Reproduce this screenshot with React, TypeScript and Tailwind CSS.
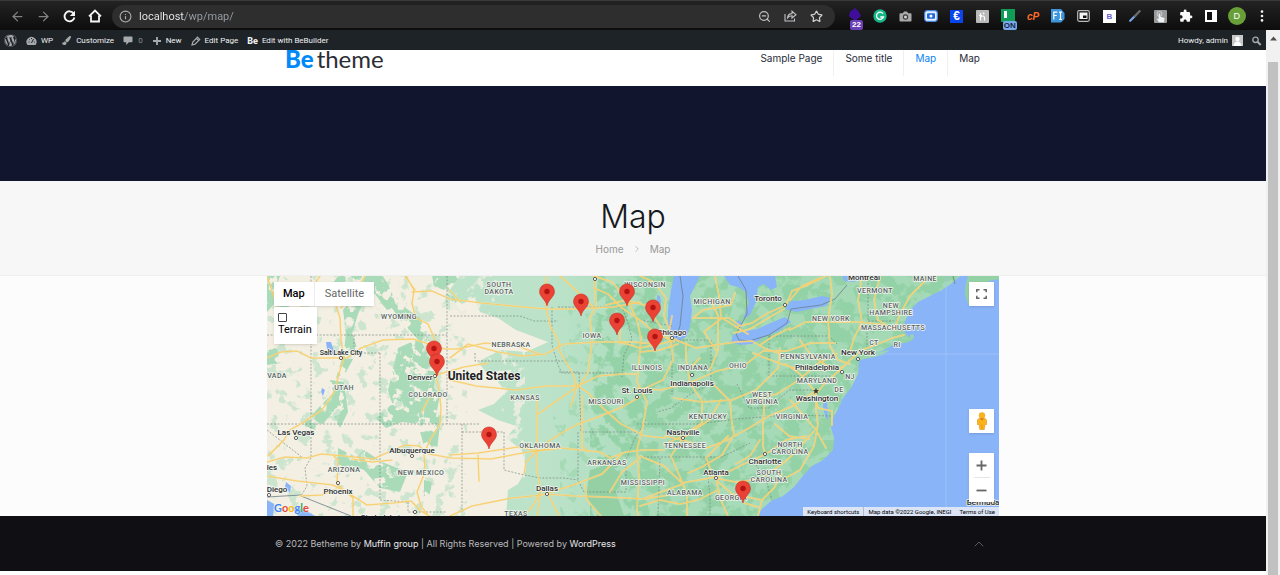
import type { ReactNode } from 'react';
import {
  ArrowLeft,
  ArrowRight,
  ChevronRight,
  ChevronUp,
  Info,
  Star,
  ZoomOut,
} from 'lucide-react';
import { FaWordpress, FaPaintBrush } from 'react-icons/fa';
import { MdExtension } from 'react-icons/md';

/* ---------- browser toolbar ---------- */

function ToolButton({ label, children }: { label: string; children: ReactNode }) {
  return (
    <button type="button" aria-label={label} className="relative flex h-6 w-full items-center justify-center">
      {children}
    </button>
  );
}

function BrowserBar() {
  return (
    <div className="flex h-[30px] items-center border-t border-[#3a3a3a] bg-linear-to-b from-[#232323] to-[#0d0d0d] pt-px pr-[5px] pl-1">
      <div className="mr-1 grid w-[104px] shrink-0 grid-cols-4">
        <ToolButton label="Back"><ArrowLeft size={15} strokeWidth={2} color="#808285" /></ToolButton>
        <ToolButton label="Forward"><ArrowRight size={15} strokeWidth={2} color="#808285" /></ToolButton>
        <ToolButton label="Reload">
          <svg width="13" height="13" viewBox="0 0 13 13">
            <path d="M10.600 3.400A5 5 0 1 0 11.400 7.500" fill="none" stroke="#f6f6f6" strokeWidth="1.900" />
            <path d="M12 .8v5.200H6.800Z" fill="#f6f6f6" />
          </svg>
        </ToolButton>
        <ToolButton label="Home">
          <svg width="14" height="14" viewBox="0 0 14 14" fill="none" stroke="#f6f6f6" strokeWidth="1.800">
            <path d="M1 7.400 7 1.500l6 5.900M3 6.500v6h8v-6" />
          </svg>
        </ToolButton>
      </div>
      <div className="flex h-[23px] min-w-0 flex-1 items-center rounded-full bg-[#2e2e2e] pr-1.5 pl-[7px]">
        <Info size={13} strokeWidth={2} color="#adafb2" className="shrink-0" />
        <input
          aria-label="Address"
          defaultValue="localhost/wp/map/"
          className="ml-[7px] h-5 min-w-0 flex-1 bg-[linear-gradient(90deg,#eceef0_46px,#9aa0a6_46px)] bg-clip-text pt-px font-['Roboto','Liberation_Sans',sans-serif] text-[11px] leading-5 text-transparent outline-none"
        />
        <div className="grid w-[78px] grid-cols-3">
          <ToolButton label="Zoom"><ZoomOut size={13} strokeWidth={2.2} color="#c0c2c4" /></ToolButton>
          <ToolButton label="Share">
            <svg width="13" height="12" viewBox="0 0 13 12" fill="none" stroke="#c0c2c4" strokeWidth="1.100">
              <path d="M1 4v7h9.500V8.500M3.500 8C3.800 5 5.500 3.700 8 3.600V1.300l4 3.400-4 3.300V5.800C6 5.800 4.700 6.500 3.500 8Z" />
            </svg>
          </ToolButton>
          <ToolButton label="Bookmark"><Star size={13} strokeWidth={2.200} color="#cfd1d3" /></ToolButton>
        </div>
      </div>
      <div className="ml-[7px] grid w-[433px] shrink-0 grid-cols-17 font-['Liberation_Sans',sans-serif]">
        <ToolButton label="Blocks">
          <svg width="14" height="16" viewBox="0 0 14 16"><path d="M2 4 7 0l4 4 2 4-6 5-6-5Z" fill="#3f0f9c" /></svg>
          <span className="absolute -bottom-0.5 left-2 rounded-xs bg-[#6b3fb5] px-0.5 text-[8px] leading-[10px] font-bold text-white">22</span>
        </ToolButton>
        <ToolButton label="Grammar">
          <svg width="14" height="14" viewBox="0 0 14 14">
            <circle cx="7" cy="7" r="6.700" fill="#15b885" />
            <path d="M10 4.600A3.600 3.600 0 1 0 10.500 8H7.300m3.200 0-1 1.300" fill="none" stroke="#fff" strokeWidth="1.300" />
          </svg>
        </ToolButton>
        <ToolButton label="Capture">
          <svg width="13" height="11" viewBox="0 0 13 11">
            <path d="M1.500 2.200h2.300L5 .5h3l1.200 1.700h2.300c.6 0 1 .4 1 1v6.300c0 .6-.4 1-1 1h-10c-.6 0-1-.4-1-1V3.200c0-.6.4-1 1-1Z" fill="#a9a9a9" />
            <circle cx="6.500" cy="6" r="2.700" fill="#3b3b3b" /><circle cx="6.500" cy="6" r="1.500" fill="#d2d2d2" />
          </svg>
        </ToolButton>
        <ToolButton label="Screen recorder">
          <svg width="14" height="12" viewBox="0 0 14 12">
            <rect x=".7" y=".7" width="12.600" height="10.600" rx="2.500" fill="#e4efff" stroke="#4a86e8" strokeWidth="1.200" />
            <rect x="3" y="3.200" width="8" height="5.600" rx="1" fill="#2266d8" />
            <circle cx="7" cy="6" r="1.500" fill="#fff" />
          </svg>
        </ToolButton>
        <ToolButton label="Currency"><span className="size-[13px] bg-[#0a45ec] text-center text-xs leading-[13px] font-bold text-white">€</span></ToolButton>
        <ToolButton label="Honey">
          <svg width="13" height="13" viewBox="0 0 13 13">
            <rect width="13" height="13" rx="1" fill="#b9b9b9" />
            <path d="M4.500 3v7.500M3 5.500h3M4.500 7.500c2-2.500 4-1.500 4 .3v2.700M7 2.600l1.300 1.500" fill="none" stroke="#fff" strokeWidth="1.200" />
          </svg>
        </ToolButton>
        <ToolButton label="Switch">
          <svg width="14" height="14" viewBox="0 0 14 14"><rect width="14" height="13" fill="#0f9d58" /><path d="M3 2h3v7H3z" fill="#fff" /></svg>
          <span className="absolute -bottom-0.5 left-2 rounded-xs bg-[#79a7e8] px-px text-[8px] leading-[9px] font-bold text-[#14284c]">ON</span>
        </ToolButton>
        <ToolButton label="cPanel"><span className="text-[10px] font-bold text-[#ff6c2c] italic">cP</span></ToolButton>
        <ToolButton label="Font inspector">
          <svg width="14" height="14" viewBox="0 0 14 14">
            <path d="M0 0h10l3.500 4v6L10 13.500H0Z" fill="#3c96dd" />
            <path d="M2.800 10.500V3.200h3.500M2.800 6.500h3M8 3.200h3M9.500 3.200v7.300M8 10.500h3" fill="none" stroke="#fff" strokeWidth="1.200" />
          </svg>
        </ToolButton>
        <ToolButton label="Picture in picture">
          <svg width="13" height="12" viewBox="0 0 13 12">
            <rect x=".7" y=".7" width="11.600" height="10.600" rx="1.500" fill="#111" stroke="#bbb" strokeWidth="1.200" />
            <path d="M2.500 2.500h8v6.500h-8z" fill="#f4f4f4" /><path d="M6 5.500h3.500V8H6z" fill="#111" />
          </svg>
        </ToolButton>
        <ToolButton label="Bootstrap"><span className="size-[13px] bg-white text-center text-[8px] leading-[13px] font-bold text-[#6a60d8]">B</span></ToolButton>
        <ToolButton label="Color picker">
          <svg width="12" height="12" viewBox="0 0 12 12">
            <path d="m1.200 10.800 5-5" stroke="#7fa6e8" strokeWidth="2.200" strokeLinecap="round" />
            <path d="m6 6 4.500-4.800" stroke="#68696c" strokeWidth="2.400" strokeLinecap="round" />
          </svg>
        </ToolButton>
        <ToolButton label="Pointer">
          <svg width="13" height="13" viewBox="0 0 13 13">
            <rect width="13" height="13" rx="1" fill="#9a9a9a" />
            <circle cx="5.500" cy="4" r="2.500" fill="none" stroke="#c9ced4" />
            <path d="M4.700 3.500h1.600v3.200l4.200 1.200-.5 4.300H5L2.500 8.500l2.200.5Z" fill="#eef1f4" />
          </svg>
        </ToolButton>
        <ToolButton label="Extensions"><MdExtension size={14} color="#f8f8f8" /></ToolButton>
        <ToolButton label="Side panel">
          <svg width="12" height="12" viewBox="0 0 12 12"><path d="M0 0h12v12H0z" fill="#fff" /><path d="M2 2h5v8H2z" fill="#111" /></svg>
        </ToolButton>
        <ToolButton label="Profile"><span className="size-[18px] shrink-0 rounded-full bg-[#689f38] text-center text-[9px] leading-[18px] text-white">D</span></ToolButton>
        <ToolButton label="Menu">
          <svg width="4" height="12" viewBox="0 0 4 12" fill="#f2f2f2"><circle cx="2" cy="1.600" r="1.300" /><circle cx="2" cy="6" r="1.300" /><circle cx="2" cy="10.400" r="1.300" /></svg>
        </ToolButton>
      </div>
    </div>
  );
}

/* ---------- WordPress admin bar ---------- */

function AdminBar() {
  return (
    <div className="flex h-5 items-center justify-between bg-[#1d2327] pt-px pr-1 pl-1 font-['Roboto','Noto_Sans',sans-serif] text-[8px] text-[#f0f0f1]">
      <div className="flex items-center gap-[9px]">
        <a href="#about" aria-label="About WordPress"><FaWordpress size={13} color="#a7aaad" /></a>
        <a href="#site" className="flex items-center gap-1">
          <svg width="11" height="10" viewBox="0 0 11 10">
            <path d="M1.500 9A5 5 0 1 1 9.500 9Z" fill="#a7aaad" />
            <path d="M5.500 7 7.500 3M2.500 6h1M3.300 3.500l.7.500M5.500 2v1M8 6h.8" stroke="#1d2327" />
          </svg>
          WP
        </a>
        <a href="#customize" className="flex items-center gap-[5px]"><FaPaintBrush size={9} color="#a7aaad" />Customize</a>
        <a href="#comments" className="flex items-center gap-[5px] text-[#8c8f94]">
          <svg width="10" height="9" viewBox="0 0 10 9"><path d="M1.500.5h7c.6 0 1 .4 1 1v3.700c0 .6-.4 1-1 1H5.800L3.200 9V6.200H1.500c-.6 0-1-.4-1-1V1.500c0-.6.4-1 1-1Z" fill="#a7aaad" /></svg>
          0
        </a>
        <a href="#new" className="flex items-center gap-1">
          <svg width="10" height="10" viewBox="0 0 10 10"><path d="M5 1v8M1 5h8" stroke="#a7aaad" strokeWidth="1.800" /></svg>
          New
        </a>
        <a href="#edit" className="flex items-center gap-1">
          <svg width="10" height="10" viewBox="0 0 10 10" fill="none" stroke="#a7aaad" strokeWidth="1.200">
            <path d="m1 9 .8-3L6.500 1.200l2.200 2.200L4 8.200ZM5.500 2.500l2 2" />
          </svg>
          Edit Page
        </a>
        <a href="#builder" className="flex items-center gap-1"><b className="text-[9px] leading-3 font-extrabold">Be</b>Edit with BeBuilder</a>
      </div>
      <div className="flex items-center">
        <a href="#profile" className="flex items-center gap-1">
          Howdy, admin
          <svg width="11" height="11" viewBox="0 0 11 11">
            <path d="M0 0h11v11H0z" fill="#c6c8ca" /><circle cx="5.500" cy="4" r="2.200" fill="#fff" /><path d="M1.500 11c.3-6 7.700-6 8 0Z" fill="#fff" />
          </svg>
        </a>
        <button type="button" aria-label="Search" className="ml-2">
          <svg width="11" height="10" viewBox="0 0 11 10" fill="none" stroke="#a7aaad"><circle cx="4.500" cy="3.800" r="2.700" strokeWidth="1.300" /><path d="m6.500 5.800 3.200 3.200" strokeWidth="2" /></svg>
        </button>
      </div>
    </div>
  );
}

/* ---------- map ---------- */

const WEST_FOREST = [
  'M267 276h13l-5 14 8 4-16 18ZM267 345l10 4 4 14-14 2ZM338 276h45l8 14 5 16-9 4-12-16-14 8-10-12-12 3-6-10Z',
  'M343 310l10-12 9-10 4 8-8 18-6 20 6 16-12 22-10 6 8-26 2-20ZM330 380l14 2 4 30-8 16-6-12 2-14Z',
  'M432 276h38l-4 18-12 10-10-14-10-4ZM386 300l14 4 20 14 10 24-8 2-20-22Z',
  'M398 348l18-8 10 4 12 14-4 30 6 6-6 34-10 18-6-22-16-2-16 6-10-10 16-14-4-14Z',
  'M364 450l18 12 26 10-8 20-20-4-16-18-16-6ZM424 480l8 2-2 12-6 2ZM425 420l16-4-4 34-10-6Z',
  'M278 300l20 12-6 16-16-8ZM303 425l18-20 14-14 4 14-22 26ZM338 448l16 8-4 14-12-6Z',
];

const PLAINS =
  'M460 276 448 292 462 304 474 298 480 312 498 318 516 330 548 342 526 352 500 350 478 362 486 372 512 370 498 382 506 392 494 404 478 410 498 420 516 426 506 438 522 450 526 470 518 484 508 490 506 516H1010V266H460Z';

const ATLANTIC =
  'M960 276 951 284 942 290 930 296 918 302 911 309 905 321 903 330 907 335 913 340 905 343 894 344 884 350 866 357 859 361 858 374 851 388 843 398 838 409 832 420 831 428 834 438 833 450 823 460 812 466 802 477 794 487 783 496 771 501 762 509 757 517H1000V276Z';

const LAKES = [
  'M674 276 671 290 668 311 668 329 671 339 679 341 687 336 690 326 692 310 690 296 695 286 700 276Z',
  'M724 276 730 285 738 287 746 292 749 303 743 319 750 315 756 302 758 287 764 284 771 290 777 287 775 276Z',
  'M736 322 740 320 742 326 737 328Z',
  'M733 335 731 342 740 345 752 344 764 337 779 331 791 322 785 317 773 322 757 329 745 331Z',
  'M785 309 791 301 805 300 822 296 831 298 826 306 811 309 796 312Z',
  'M326 342l5 0 2 6 2 8-5-3-3-4ZM322 388l3 2-2 6-2-4ZM267 500l7 4-1 14h-6ZM286 482l5 4-1 7-5-6ZM291 507l12 2 14 8h-18ZM842 276h18l-6 6-10-1ZM824 396l3 6 1 16 4 8-5-4-4-14Z',
  'M657 295l3 1 1 6-2 5-2-5Z',
];

const ROADS = [
  'M267 358l14-6 16-1 14 7h36l14-10 22-8 30-1 32 10h12l28-6 32 3 22 8',
  'M406 276l8 14-2 14 4 14 12 6 8 18-2 16 2 18 3 14 2 18-1 16-10 16-6 14 1 18-8 20 4 14 6 8',
  'M334 300l6 18 1 22 3 18-4 12-6 22-12 18-18 12-14 8-6 10-16 16',
  'M412 292l20-1 18 8 32 4 30 3 34 3h28l40-2 26-5',
  'M267 462l18-5 22 1 14-4 24 2 28 3 18-8 14-6 14 1 10 8 22 4 40 1 26-5 30-5 10-1',
  'M267 476l30 5 36 4 20 11 14 9 26-2 18-2 10 10 10 6',
  'M334 456l4 4-1 24 16 14M300 496l22-1 14-6M353 496v20M392 460l-20 2-20-3',
  'M450 358l18-14 30 8 24 4 24-2 18-10 36-2 34 0 20 2',
  'M450 380l26 6 40 4 30-4 32 0',
  'M546 276v32l4 18 8 14 2 12 12 20 5 14-6 20M594 276l2 30-6 12 2 24-4 30-9 14',
  'M537 396v54l0 20 4 20-4 26M450 455l28-2 40-6 20 4 24-3 38 4 10 6 16-6 16-2 22 0',
  'M538 448l22-14 18-10 20-7 24-10 18-10M538 414l20-14 20-14 20-10 24-2 16 0',
  'M582 396v50l6 6M478 455l1 26M538 450l-12 12-2 12M450 516l22-10 40-8 30-3 34-11 26-10 20-20',
  'M545 494l30 2 30 1 40 2 24-4M541 490l-7 14-10 12M549 496l10 20M585 484l2 16 14 16M430 396l-8 16',
  'M594 288l14 6 14 14 18 12 14 12 20 10M627 298l10 22 4 18-2 24-2 20 10 20-4 24-6 24 2 26-2 34 2 10',
  'M606 305l20-5 22 6 8 14 14 20M620 330v14M620 342l20 6 28-6 8-3M640 352l20-2 18-6',
  'M671 340l2 20-10 20-26 12M637 388l24 2 28-7 28-12 28-6 18-14 24 0 24-8 24 0',
  'M676 340l20 8 26-4 14-2 16-1 14 8 18 6M690 383l-4-24 0-16M672 316l-3 16 4 8',
  'M690 383l12 18 0 22-22 14-16 8M690 383l24 2 16 16 2 22 2 12-12 20-20 12-14 6',
  'M674 398l28 4 30-2 24-10 22-22 2-20M710 370l8-20 0-34-8-18M693 318h36l10 7M693 318l10-8 28-5 4-12',
  'M716 350l-12-18 18-14 26 16M736 327l16-4 16-10 18-8 6-14 16-6 20-10M734 333l16-4 20-12 14-8',
  'M790 330l16-8 24 0 28 0 20 2 18 4M760 345l14-9 16-8M753 353l20 8 24 8 26 1 20-3M790 300l12-14 18-8',
  'M830 276l2 18-4 26 2 26 8 14 12 4M862 276l-4 24 4 22-8 16-4 14M880 276l-6 24 4 20 16 10 6-16 10-18 14-14',
  'M850 360l12-10 16-6 14-6 12-3M850 360l-10 10-14 12-10 12 0 16 2 14-4 22-14 24-22 12',
  'M786 364l14 10 14 16 4 18M757 398l20-4 22-14 18-16 20-10M765 398l-2 24 0 24 2 8',
  'M665 436l18 4 24 8 20-8 22-12 20-12 24-10 24-16M683 438l-12 18 12 28 4 12 0 20M683 438l26-18 12-20',
  'M714 478l-8-20 22-22M714 478l22 4 24-3 12-8 14-10 14-14 14-16M716 478l28-14 22-10 20-14 20-4',
  'M640 456l24 10 18 17 34-6M640 458l-18 14-12 20M683 484l-22 8-16 6M716 478l4 20 8 18M716 480l16 14 30 6 12-12 8-14',
  'M762 500l-4 16M744 503l14 4M640 506l20-6 20 4 18-4 20-10M818 408l14 3 0 14M790 400l14 16 12 14 10 18',
  'M760 440l-10 16-14 8M775 424l14 12 20 3M594 276l18 6 14 16M640 276l14 6 12 16-2 18 8 20M715 276l4 20 2 20',
  'M575 384l12 8 18 18 16 14 24 12 20 2M560 276l20 18 14 14M700 358l-12 12M800 340l10 14 20 14',
  'M450 290l10 12M405 276l10 14M320 276l-14 20-10 24M365 276l-10 16-14 16M267 276l10 30M436 375l28-8 24-4',
];

const BORDERS =
  'M447 276v148M311 276v182l-6 10 2 18-6 10M267 335h180M354 335v18h26M380 353v147M267 424h212M450 316h70l14 5 24 0M462 424v88M462 432h42v38l16 4 20 4 24 0 14 2M380 500l28 2v10h38M558 307h64l6 16 4 16-8 16-2 22M552 307v38l6 20 4 8h58M559 372h20l2 60h56M567 361h-92v-8M578 432v48l6 12h42M637 424h60l40-5 50-4 44 1M640 457h82l28-14M672 340h38M711 340v44l-20 10-20 14-14 4M640 320l32 6M672 341v54M769 336v40M769 376h62M769 336l60 0 8 8M867 322v26M868 321h30M868 276v44M706 457l4 40v20M750 456l16 24 6 20M626 490v-30l8-20 12-20M660 458l-2 58M737 384l12 24 20 0 20-18 26 0M267 430l36 28';

type Label = [string, number, number];

const STATES: Label[] = [
  ['SOUTH', 499, 287], ['DAKOTA', 499, 294], ['WYOMING', 399, 319], ['NEBRASKA', 511, 347], ['IOWA', 592, 338],
  ['WISCONSIN', 645, 287], ['MICHIGAN', 712, 304], ['ILLINOIS', 647, 370], ['INDIANA', 693, 370], ['OHIO', 738, 368],
  ['PENNSYLVANIA', 808, 359], ['NEW YORK', 831, 321], ['VERMONT', 875, 293], ['NEW', 891, 308], ['HAMPSHIRE', 891, 315],
  ['MASSACHUSETTS', 893, 330], ['CT', 874, 345], ['RI', 897, 347], ['NJ', 850, 379], ['DE', 839, 392], ['MAINE', 925, 281],
  ['MARYLAND', 817, 383], ['WEST', 762, 397], ['VIRGINIA', 762, 404], ['VIRGINIA', 792, 419], ['KENTUCKY', 708, 419],
  ['TENNESSEE', 685, 448], ['NORTH', 790, 447], ['CAROLINA', 790, 454], ['SOUTH', 769, 475], ['CAROLINA', 769, 482],
  ['ALABAMA', 685, 495], ['GEORGIA', 731, 500], ['MISSISSIPPI', 643, 485], ['ARKANSAS', 607, 465], ['MISSOURI', 606, 404],
  ['KANSAS', 525, 400], ['OKLAHOMA', 540, 448], ['TEXAS', 516, 516], ['COLORADO', 428, 397], ['UTAH', 344, 390],
  ['VADA', 277, 378], ['ARIZONA', 344, 472], ['NEW MEXICO', 421, 475],
];

const CITIES: Label[] = [
  ['Toronto', 768, 301], ['Chicago', 672, 335], ['Indianapolis', 692, 386], ['St. Louis', 637, 393], ['New York', 858, 355],
  ['Philadelphia', 817, 370], ['Washington', 817, 401], ['Nashville', 683, 435], ['Charlotte', 765, 464], ['Atlanta', 716, 475],
  ['Dallas', 547, 491], ['Albuquerque', 412, 453], ['Phoenix', 338, 494], ['Las Vegas', 296, 435], ['Denver', 420, 380],
  ['Montreal', 864, 280], ['Diego', 277, 492], ['les', 272, 470], ['Ciudad Juárez', 386, 520], ['Bermuda', 983, 505],
];

const CITY_DOTS: [number, number][] = [
  [785, 305], [672, 338], [692, 375], [637, 397], [858, 359], [842, 372], [683, 438], [765, 454], [716, 478], [547, 494],
  [412, 456], [338, 483], [296, 438], [435, 376], [341, 358], [595, 279], [415, 512], [269, 495],
];

const PINS: [number, number][] = [
  [547, 306], [581, 316], [627, 306], [653, 322], [617, 335], [655, 351], [434, 363], [437, 376], [489, 449], [743, 503],
];

function MapDrawing() {
  return (
    <svg viewBox="267 276 732 240" className="block w-full" role="img" aria-label="Map of the United States">
      <defs>
        <filter id="patches" x="0" y="0" width="1" height="1">
          <feTurbulence type="fractalNoise" baseFrequency="0.07" numOctaves="4" seed="7" />
          <feColorMatrix values="0 0 0 0 0  0 0 0 0 0  0 0 0 0 0  12 0 0 0 -5.400" result="noise" />
          <feComposite in="SourceGraphic" in2="noise" operator="in" />
        </filter>
        <filter id="sparse" x="0" y="0" width="1" height="1">
          <feTurbulence type="fractalNoise" baseFrequency="0.09" numOctaves="4" seed="12" />
          <feColorMatrix values="0 0 0 0 0  0 0 0 0 0  0 0 0 0 0  12 0 0 0 -7" result="noise" />
          <feComposite in="SourceGraphic" in2="noise" operator="in" />
        </filter>
        <filter id="dense" x="0" y="0" width="1" height="1">
          <feTurbulence type="fractalNoise" baseFrequency="0.09" numOctaves="4" seed="3" />
          <feColorMatrix values="0 0 0 0 0  0 0 0 0 0  0 0 0 0 0  14 0 0 0 -5.500" result="noise" />
          <feComposite in="SourceGraphic" in2="noise" operator="in" />
        </filter>
        <linearGradient id="fade" x1="0" x2="1">
          <stop offset="0" stopColor="#9dd6af" stopOpacity="0" />
          <stop offset=".25" stopColor="#9dd6af" stopOpacity=".6" />
          <stop offset=".5" stopColor="#9dd6af" stopOpacity=".7" />
          <stop offset="1" stopColor="#9dd6af" stopOpacity=".8" />
        </linearGradient>
      </defs>
      <path d="M267 276h732v240H267z" fill="#f3efe3" />
      <path d="M267 276h200v240H267z" fill="#b5dfc3" filter="url(#sparse)" opacity=".6" />
      <path d={WEST_FOREST.join('')} fill="#a9dbb9" filter="url(#dense)" />
      <path d={PLAINS} fill="#bce3ca" />
      <path d="M450 276h50v60h-50zM470 330h55v150h-55z" fill="#f3efe3" filter="url(#sparse)" opacity=".8" />
      <path d="M545 276h454v240H545Z" fill="url(#fade)" />
      <path d="M598 276h401v240H590V430Z" fill="#92d1a5" filter="url(#patches)" opacity=".9" />
      <path d="M550 400h50v116h-40v-60ZM556 310h50v60h-40Z" fill="#a6dab7" filter="url(#sparse)" />
      <path d="M590 470l20-6 10 10-4 18 8 24h-24l-14-20Z" fill="#94d0a4" />
      <g fill="#8ab4f8">
        <path d={ATLANTIC} />
        <path d={LAKES.join('')} />
      </g>
      <path d="M851 360 868 354 890 350 882 355 860 360Z" fill="#9ad6ab" />
      <path d="M900 336l8 2 6 1-1-5-3 1 1 4-8 1Z" fill="#9ad6ab" />
      <path d="M968 276h31v3l-10 2-8 10-6 14-7-1-3-10 1-10Z" fill="#93d2a5" />
      <path d="m842 397-8 10-2 10 4-10ZM820 418l12 1 0 7-5 4ZM818 440l16 0-2 8-10 3Z" fill="#94d2a5" />
      <path d="M946 276v240M866 354h133" stroke="#a3c4fa" strokeWidth=".7" />
      <path d={BORDERS} fill="none" stroke="#72807a" strokeWidth=".8" strokeDasharray="2 1.500" opacity=".8" />
      <path d="M680 276l3 20-3 30-4 12M738 276l8 14 1 24-11 20 3 6 10 1 20-6 18-12 4-14 30-4 14-6 12-14M955 284l-2-8M301 496l50 20M267 497l34-2" fill="none" stroke="#6b7d8a" strokeWidth=".8" />
      <g fill="none" strokeLinejoin="round" strokeLinecap="round">
        <path d={ROADS.join('')} stroke="#f8e3a6" strokeWidth="1.900" opacity=".6" />
        <path d={ROADS.join('')} stroke="#f7ce6b" strokeWidth="1.100" />
      </g>
      <g fill="#fff" stroke="#4c4c4c" strokeWidth=".9">
        {CITY_DOTS.map(([x, y]) => <circle key={`${x}-${y}`} cx={x} cy={y} r="1.600" />)}
      </g>
      <path d="m816 388 .9 2 2.100.2-1.600 1.400.5 2.100-1.900-1.100-1.900 1.100.5-2.100-1.600-1.400 2.100-.2Z" fill="#333" />
      <g textAnchor="middle" stroke="#f4f8f2" strokeWidth="1.500" strokeLinejoin="round" paintOrder="stroke" className="font-['Roboto','Liberation_Sans',sans-serif]">
        <g fill="#59615e" className="text-[7px] font-medium tracking-[0.4px]">
          {STATES.map(([name, x, y]) => <text key={`${name}-${x}`} x={x} y={y}>{name}</text>)}
        </g>
        <g fill="#2b2d2e" className="text-[8px] font-medium">
          {CITIES.map(([name, x, y]) => <text key={name} x={x} y={y}>{name}</text>)}
          <text x="341" y="355" className="text-[7px]">Salt Lake City</text>
        </g>
        <text x="484" y="380" fill="#1f2122" className="text-[12px] font-bold">United States</text>
      </g>
      {PINS.map(([x, y]) => (
        <g key={`${x}-${y}`} transform={`translate(${x} ${y})`}>
          <path d="M0 0C-1.200-6.500-7.500-9-7.500-14.600a7.500 7.500 0 0 1 15 0C7.500-9 1.200-6.500 0 0Z" fill="#ea4335" stroke="#c5221f" strokeWidth=".5" />
          <circle cy="-14.500" r="2.700" fill="#b31412" />
        </g>
      ))}
    </svg>
  );
}

function MapWidget() {
  return (
    <section className="relative mx-auto w-full max-w-[732px] overflow-hidden font-['Roboto','Liberation_Sans',sans-serif]">
      <MapDrawing />
      <div className="absolute top-1.5 left-[7px] flex flex-col items-start">
        <div className="flex h-6 items-center bg-white text-[11px] shadow-sm">
          <button type="button" className="h-full border-r border-[#ececec] px-[9px] font-medium text-black">Map</button>
          <button type="button" className="h-full px-2.5 text-[#666]">Satellite</button>
        </div>
        <label className="mt-px flex w-[43px] flex-col gap-0.5 bg-white px-1 pt-1.5 pb-2 text-[11px] leading-3 text-black shadow-sm">
          <input type="checkbox" className="size-[9px] appearance-none rounded-[1px] border border-[#444] bg-white" />
          Terrain
        </label>
      </div>
      <button type="button" aria-label="Toggle fullscreen" className="absolute top-1.5 right-[5px] flex h-6 w-[25px] items-center justify-center bg-white shadow-sm">
        <svg width="11" height="10" viewBox="0 0 11 10" fill="none" stroke="#666" strokeWidth="1.500"><path d="M.8 3.200V.8h2.700M7.500.8h2.700v2.400M10.200 6.800v2.400H7.500M3.500 9.200H.8V6.800" /></svg>
      </button>
      <button type="button" aria-label="Street View" className="absolute right-[5px] bottom-[83px] flex h-6 w-[25px] items-center justify-center bg-white shadow-sm">
        <svg width="10" height="18" viewBox="0 0 10 18">
          <path d="M2 6.500h6l1.700 1.500v4.500H8L7.300 17.500H2.700L2 12.500H.3V8Z" fill="#fbb31c" stroke="#d98a12" strokeWidth=".5" />
          <circle cx="5" cy="3.500" r="3" fill="#fbb31c" stroke="#e09a18" strokeWidth=".4" />
          <path d="m3 6.500 2 2 2-2Z" fill="#dc6a1b" /><path d="M5 12.500v5" stroke="#d98a12" strokeWidth=".6" />
        </svg>
      </button>
      <div className="absolute right-[5px] bottom-3.5 flex w-[25px] flex-col items-center bg-white shadow-sm">
        <button type="button" aria-label="Zoom in" className="flex h-6 w-full items-center justify-center">
          <svg width="11" height="11" viewBox="0 0 11 11"><path d="M5.500.5v10M.5 5.500h10" stroke="#666" strokeWidth="1.800" /></svg>
        </button>
        <span className="h-px w-4 bg-[#e6e6e6]" />
        <button type="button" aria-label="Zoom out" className="flex h-6 w-full items-center justify-center">
          <svg width="11" height="11" viewBox="0 0 11 11"><path d="M.5 5.500h10" stroke="#666" strokeWidth="1.800" /></svg>
        </button>
      </div>
      <a href="#google" className="absolute bottom-0.5 left-[7px] font-['Lato','Liberation_Sans',sans-serif] text-[11px] leading-3 font-bold [text-shadow:0_0_2px_white]">
        <span className="text-[#4285f4]">G</span><span className="text-[#ea4335]">o</span><span className="text-[#fbbc05]">o</span><span className="text-[#4285f4]">g</span><span className="text-[#34a853]">l</span><span className="text-[#ea4335]">e</span>
      </a>
      <div className="absolute right-0 bottom-0 flex h-[9px] items-center bg-[#f5f5f5]/75 text-[6px] leading-[9px] text-black">
        <button type="button" className="px-1">Keyboard shortcuts</button>
        <span className="border-l border-[#bbb] px-1">Map data ©2022 Google, INEGI</span>
        <a href="#terms" className="px-1">Terms of Use</a>
      </div>
    </section>
  );
}

/* ---------- page ---------- */

const NAV = [
  { label: 'Sample Page', active: false },
  { label: 'Some title', active: false },
  { label: 'Map', active: true },
  { label: 'Map', active: false },
];

function SiteHeader() {
  return (
    <header className="h-9 bg-white">
      <div className="mx-auto flex max-w-[732px] items-start justify-between pr-2 pl-[18px]">
        <a href="#home" className="flex items-baseline gap-[3px] font-['Lato','Liberation_Sans',sans-serif] text-2xl leading-[18px]">
          <span className="font-black text-[#0089f7]">Be</span>
          <span className="text-[#2b2d35]">theme</span>
        </a>
        <nav className="flex font-['Inter','Liberation_Sans',sans-serif] text-[10px] leading-4">
          {NAV.map((item, i) => (
            <a
              key={i}
              href={`#nav-${i}`}
              className={`h-[26px] border-r border-[#f0f0f0] px-[11px] last:border-r-0 ${item.active ? 'text-[#0a84f5]' : 'text-[#2a2b39]'}`}
            >
              {item.label}
            </a>
          ))}
        </nav>
      </div>
    </header>
  );
}

export default function App() {
  return (
    <div className="flex min-h-screen flex-col bg-white">
      <BrowserBar />
      <div className="flex flex-1">
        <div className="flex min-w-0 flex-1 flex-col">
          <AdminBar />
          <SiteHeader />
          <div className="h-[95px] bg-[#11162e]" />
          <div className="flex h-[95px] flex-col items-center border-b border-[#efefef] bg-[#f7f7f7] pt-4 font-['Inter','Liberation_Sans',sans-serif]">
            <h1 className="text-[32px] leading-10 font-light text-[#161922]">Map</h1>
            <nav aria-label="Breadcrumb" className="mt-1 flex items-center gap-2 text-[10px] leading-4 text-[#979797]">
              <a href="#home">Home</a>
              <ChevronRight size={10} strokeWidth={2} color="#b5b5b5" />
              <a href="#map">Map</a>
            </nav>
          </div>
          <main className="bg-[#fcfcfc]"><MapWidget /></main>
          <footer className="bg-[#101014]">
            <div className="mx-auto flex h-[55px] max-w-[732px] items-center justify-between pr-3.5 pl-2 font-['Inter','Liberation_Sans',sans-serif] text-[9px] text-[#b9b9bb]">
              <p>
                © 2022 Betheme by <a href="#muffin" className="text-[#e8e8e8]">Muffin group</a> | All Rights Reserved | Powered by{' '}
                <a href="#wordpress" className="text-[#e8e8e8]">WordPress</a>
              </p>
              <a href="#top" aria-label="Back to top"><ChevronUp size={16} strokeWidth={1} color="#808083" className="-mr-0.5" /></a>
            </div>
          </footer>
        </div>
        <div aria-hidden="true" className="flex w-3.5 flex-col items-center bg-[#f1f1f1]">
          <svg width="7" height="32" viewBox="0 0 7 32"><path d="m0 10.500 3.500-4 3.500 4Z" fill="#505050" /></svg>
          <div className="w-2.5 flex-1 bg-[#c1c1c1]" />
        </div>
      </div>
    </div>
  );
}
